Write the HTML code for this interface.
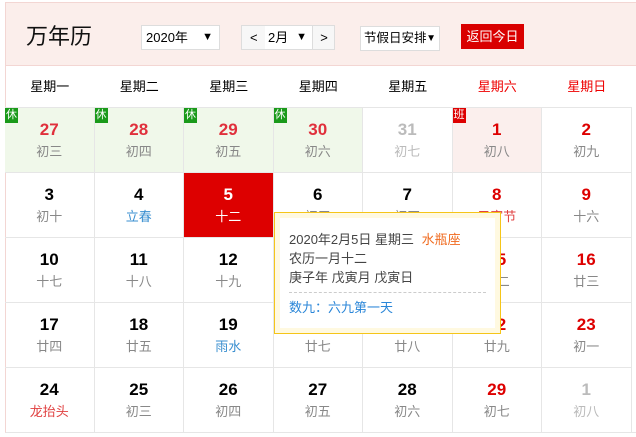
<!DOCTYPE html>
<html><head><meta charset="utf-8"><style>
*{margin:0;padding:0;box-sizing:border-box}
body{width:636px;height:437px;background:#fff;font-family:"Liberation Sans","Noto Sans CJK SC",sans-serif;position:relative;overflow:hidden}
.hd{position:absolute;left:5px;top:2px;width:640px;height:64px;background:#fbeeeb;border:1px solid #f3d6d3;border-right:none}
.t{position:absolute;left:26px;top:19px;font-size:22px;color:#111}
.sel{position:absolute;background:#fff;border:1px solid #ddd;height:25px;font-size:13px;line-height:23px;color:#000;padding-left:4px;white-space:nowrap}
.sel i{position:absolute;right:6px;top:0;font-style:normal;font-size:11px}
.btn{position:absolute;left:461px;top:24px;width:63px;height:25px;background:#d90000;color:#fff;font-size:13px;line-height:25px;text-align:center}
.wk{position:absolute;top:66px;height:41px;line-height:41px;font-size:13px;text-align:center;width:89.5px}
.grid{position:absolute;left:5px;top:66px;width:640px;height:367px;border-left:1px solid #f3d6d3;border-bottom:1px solid #e6e6e6}
.c{position:absolute;width:89.5px;height:65px;border-right:1px solid #e6e6e6;border-top:1px solid #e6e6e6;text-align:center}
.c b{display:block;margin-top:12px;font-size:17px;line-height:20px;color:#000}
.c s{display:block;text-decoration:none;font-size:13px;line-height:18px;margin-top:3px;color:#888}
.g{background:#f0f8ea}.p{background:#fbefed}
.r b{color:#e0303c}.rr b{color:#dd0000}
.gr b,.gr s{color:#bbb}
.td{background:#dd0000}.td b,.td s{color:#fff}
.bd{position:absolute;left:0;top:0;width:13px;height:15px;font-size:11px;line-height:15px;color:#fff;text-align:center}
.tip{position:absolute;left:274px;top:212px;width:227px;height:122px;border:1px solid #f5c518;background:#fff9e0;padding:5px}
.tip div.in{background:#fff;height:100%;padding:12px 9px 0 9px;font-size:13px;color:#444;line-height:19px}
</style></head><body>
<div class="hd"></div>
<div class="t">万年历</div>
<div class="sel" style="left:141px;top:25px;width:79px">2020年<i>▼</i></div>
<div class="sel" style="left:241px;top:25px;width:94px;background:#f7f7f7;padding:0">
<span style="position:absolute;left:8px">&lt;</span>
<span style="position:absolute;left:23px;width:47px;top:0;height:23px;background:#fff;padding-left:3px">2月<i style="position:absolute;right:5px;font-style:normal;font-size:11px">▼</i></span>
<span style="position:absolute;left:70px;width:23px;border-left:1px solid #ddd;text-align:center">&gt;</span></div>
<div class="sel" style="left:360px;top:26px;width:80px;padding-left:3px;font-size:12.5px">节假日安排<i style="right:3px;font-size:10px">▼</i></div>
<div class="btn">返回今日</div>
<div class="grid"></div>
<div id="cells"></div>
<script>
var L=5,W=89.5;
var wk=["星期一","星期二","星期三","星期四","星期五","星期六","星期日"],h="";
wk.forEach(function(t,i){h+='<div class="wk" style="left:'+(L+i*W)+'px;color:'+(i>4?'#e00':'#000')+'">'+t+'</div>'});
var rows=[
[["27","初三","g r","休"],["28","初四","g r","休"],["29","初五","g r","休"],["30","初六","g r","休"],["31","初七","gr"],["1","初八","p rr","班"],["2","初九","rr"]],
[["3","初十",""],["4","立春","",0,"#3a8fd0"],["5","十二","td"],["6","初三",""],["7","初四",""],["8","元宵节","rr",0,"#e04040"],["9","十六","rr"]],
[["10","十七",""],["11","十八",""],["12","十九",""],["13","二十",""],["14","廿一",""],["15","廿二","rr"],["16","廿三","rr"]],
[["17","廿四",""],["18","廿五",""],["19","雨水","",0,"#3a8fd0"],["20","廿七",""],["21","廿八",""],["22","廿九","rr"],["23","初一","rr"]],
[["24","龙抬头","",0,"#e04040"],["25","初三",""],["26","初四",""],["27","初五",""],["28","初六",""],["29","初七","rr"],["1","初八","gr"]]];
rows.forEach(function(r,ri){r.forEach(function(c,ci){
h+='<div class="c '+c[2]+'" style="left:'+(L+ci*W)+'px;top:'+(107+ri*65)+'px">';
if(c[3])h+='<span class="bd" style="background:'+(c[3]=="休"?"#1a9a1a":"#d00")+'">'+c[3]+'</span>';
h+='<b>'+c[0]+'</b><s'+(c[4]?' style="color:'+c[4]+'"':'')+'>'+c[1]+'</s></div>';})});
document.getElementById('cells').innerHTML=h;
</script>
<div class="tip"><div class="in">
<div>2020年2月5日 星期三 <span style="color:#f06a1e;margin-left:4px">水瓶座</span></div>
<div>农历一月十二</div>
<div>庚子年 戊寅月 戊寅日</div>
<div style="border-top:1px dashed #ccc;margin-top:5px;padding-top:5px;color:#2a86d8">数九：六九第一天</div>
</div></div>
</body></html>
